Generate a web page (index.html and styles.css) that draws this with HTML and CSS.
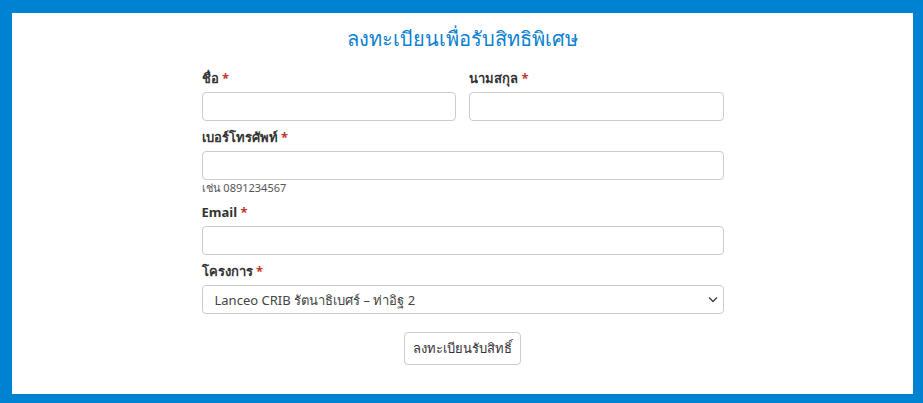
FILE: index.html
```html
<!DOCTYPE html>
<html lang="th">
<head>
    <meta charset="UTF-8">
    <meta name="viewport" content="width=device-width, initial-scale=1.0">
    <title>ลงทะเบียนเพื่อรับสิทธิพิเศษ</title>
    <link rel="stylesheet" href="styles.css">
</head>
<body>
    <div class="frame">
        <h1 class="title">ลงทะเบียนเพื่อรับสิทธิพิเศษ</h1>
        <form class="register-form">
            <div class="row two-col">
                <div class="field">
                    <label>ชื่อ <span class="req">*</span></label>
                    <input type="text" class="input">
                </div>
                <div class="field">
                    <label>นามสกุล <span class="req">*</span></label>
                    <input type="text" class="input">
                </div>
            </div>
            <div class="field">
                <label>เบอร์โทรศัพท์ <span class="req">*</span></label>
                <input type="tel" class="input">
                <small class="hint">เช่น 0891234567</small>
            </div>
            <div class="field">
                <label>Email <span class="req">*</span></label>
                <input type="email" class="input">
            </div>
            <div class="field">
                <label>โครงการ <span class="req">*</span></label>
                <div class="select-wrap">
                    <select class="input select">
                        <option>Lanceo CRIB รัตนาธิเบศร์ – ท่าอิฐ 2</option>
                    </select>
                    <svg class="caret" width="10" height="7" viewBox="0 0 10 7">
                        <path d="M1 1.5 L5 5.5 L9 1.5" fill="none" stroke="#444" stroke-width="1.4"/>
                    </svg>
                </div>
            </div>
            <div class="actions">
                <button type="button" class="btn">ลงทะเบียนรับสิทธิ์</button>
            </div>
        </form>
    </div>
</body>
</html>
```

FILE: styles.css
```css
* {
    margin: 0;
    padding: 0;
    box-sizing: border-box;
}

body {
    background: #0082d2;
    height: 403px;
    padding: 13px 10px 9px 12px;
    font-family: "Noto Sans", "Liberation Sans", sans-serif;
    color: #333;
    overflow: hidden;
}

.frame {
    background: #fff;
    height: 100%;
    padding-top: 11px;
}

.title {
    text-align: center;
    color: #0b7fd0;
    font-size: 20px;
    font-weight: 400;
    line-height: 30px;
    margin-bottom: 14px;
}

.register-form {
    width: 522px;
    margin: 0 auto;
}

.two-col {
    display: grid;
    grid-template-columns: 1fr 1fr;
    gap: 13px;
}

.field {
    display: flex;
    flex-direction: column;
    margin-bottom: 6px;
}

.field label {
    font-size: 13px;
    font-weight: 700;
    line-height: 20px;
    margin-bottom: 4px;
}

.req {
    color: #c0392b;
}

.input {
    height: 29px;
    border: 1px solid #ccc;
    border-radius: 4px;
    background: #fff;
    font-family: inherit;
    font-size: 13px;
    padding: 0 12px;
    color: #444;
}

.select-wrap {
    position: relative;
}

.select {
    width: 100%;
    appearance: none;
    -webkit-appearance: none;
}

.caret {
    position: absolute;
    right: 6px;
    top: 11px;
    pointer-events: none;
}

.hint {
    font-size: 11px;
    line-height: 14px;
    margin-top: 1px;
    margin-bottom: 1px;
    color: #555;
}

.actions {
    display: flex;
    justify-content: center;
    padding-top: 12px;
}

.btn {
    height: 33px;
    padding: 0 8px;
    border: 1px solid #ccc;
    border-radius: 4px;
    background: #fff;
    font-family: inherit;
    font-size: 13px;
    color: #333;
}
```
